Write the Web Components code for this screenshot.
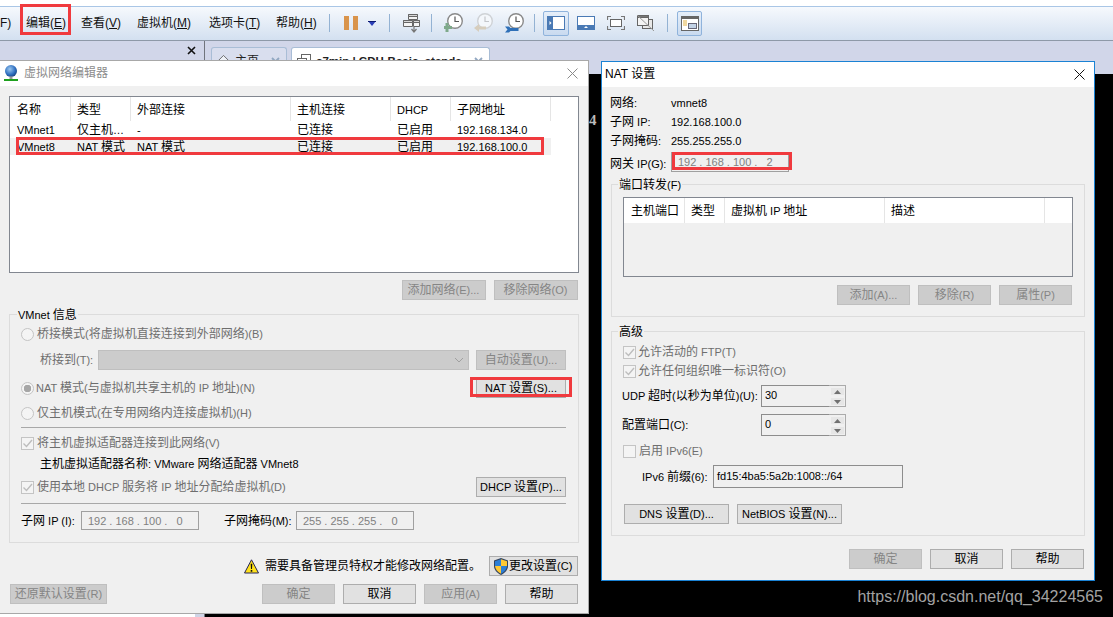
<!DOCTYPE html>
<html lang="zh-CN">
<head>
<meta charset="utf-8">
<title>虚拟网络编辑器</title>
<style>
  html, body { margin: 0; padding: 0; background: #000; overflow: hidden; }
  body { font: 11px/14px "Liberation Sans", "Noto Sans CJK SC", sans-serif; color: #000; }
  .zh { font-size: 12px; }
  .off { color: #6e6e6e; }
  svg { display: block; flex: none; }
</style>
</head>
<body>
<vm-desktop>
  <vm-toolbar>
    <vm-menu-item style="width:26px">F)</vm-menu-item>
    <vm-menu-item style="width:55px">编辑(<u>E</u>)</vm-menu-item>
    <vm-menu-item style="width:56px">查看(<u>V</u>)</vm-menu-item>
    <vm-menu-item style="width:72px">虚拟机(<u>M</u>)</vm-menu-item>
    <vm-menu-item style="width:67px">选项卡(<u>T</u>)</vm-menu-item>
    <vm-menu-item style="width:53px">帮助(<u>H</u>)</vm-menu-item>
    <vm-sep></vm-sep>
    <vm-tool style="margin-left:14px;width:14px">
      <svg width="14" height="14" viewBox="0 0 14 14"><rect width="5" height="14" fill="#d9944c"/><rect x="9" width="5" height="14" fill="#d9944c"/></svg>
    </vm-tool>
    <vm-tool style="margin-left:10px;width:8px">
      <svg width="8" height="5" viewBox="0 0 8 5"><path d="M0 0h8L4 5z" fill="#2a3fb8"/><path d="M0 0h8v1H0z" fill="#0d1a70"/></svg>
    </vm-tool>
    <vm-sep style="margin-left:13px"></vm-sep>
    <vm-tool style="margin-left:12px;width:18px">
      <svg width="17" height="19" viewBox="0 0 17 19" fill="#f4f4f4" stroke="#666"><path d="M5.500 .5h9v5h-9z"/><path d="M.5 6.500h9v6h-9z"/><path d="M10.500 6.500h6v6h-6z"/><path d="M5.500 .5h9v2h-9zM.5 6.500h9v2h-9zM10.500 6.500h6v2h-6z" fill="#d8d8d8"/><path d="M11 13v4.500M8.500 15l2.500 3 2.500-3" fill="none" stroke="#777" stroke-width="1.200"/></svg>
    </vm-tool>
    <vm-sep style="margin-left:11px"></vm-sep>
    <vm-tool style="margin-left:12px;width:19px">
      <svg width="19" height="20" viewBox="0 0 19 20"><circle cx="11" cy="8" r="7.300" fill="#fff" stroke="#8a8a8a" stroke-width="1.400"/><path d="M11 3.500V8.500H15" fill="none" stroke="#555" stroke-width="1.200"/><path d="M3 10v9M0 14.500h8" stroke="#7fa98b" stroke-width="3"/></svg>
    </vm-tool>
    <vm-tool style="margin-left:11px;width:19px">
      <svg width="19" height="20" viewBox="0 0 19 20"><circle cx="11" cy="8" r="7.300" fill="#f4f7fb" stroke="#cfd2d6" stroke-width="1.400"/><path d="M11 3.500V8.500H15" fill="none" stroke="#c4c6ca" stroke-width="1.200"/><path d="M0 15l5-4v2.500h7v3H5V19z" fill="#d6cdbd"/></svg>
    </vm-tool>
    <vm-tool style="margin-left:12px;width:19px">
      <svg width="19" height="20" viewBox="0 0 19 20"><circle cx="11" cy="8" r="7.300" fill="#fff" stroke="#8a8a8a" stroke-width="1.400"/><path d="M11 3.500V8.500H15" fill="none" stroke="#555" stroke-width="1.200"/><path d="M0 13.500h4l1.500 1.500h8v3h-8L4 19.500H0l2.500-3z" fill="#2f70b8"/></svg>
    </vm-tool>
    <vm-sep style="margin-left:10px"></vm-sep>
    <vm-tool active style="margin-left:8px;width:26px">
      <svg width="18" height="14" viewBox="0 0 18 14"><rect x=".5" y=".5" width="17" height="13" fill="#fff" stroke="#4a7ab5"/><rect width="6" height="14" fill="#4a7ab5"/><path d="M2.500 5l2 2-2 2z" fill="#fff"/></svg>
    </vm-tool>
    <vm-tool style="margin-left:8px;width:18px">
      <svg width="18" height="14" viewBox="0 0 18 14"><rect x=".5" y=".5" width="17" height="13" fill="#fff" stroke="#4a7ab5"/><rect y="9" width="18" height="5" fill="#4a7ab5"/><path d="M7 12l2-2 2 2z" fill="#fff"/></svg>
    </vm-tool>
    <vm-tool style="margin-left:12px;width:18px">
      <svg width="18" height="14" viewBox="0 0 18 14" fill="none" stroke="#777"><rect x="3.500" y="3.500" width="11" height="7" fill="#fff" stroke="#666"/><path d="M.5 4V.5H4M14 .5h3.500V4M17.500 10v3.500H14M4 13.500H.5V10" stroke-width="1.200"/></svg>
    </vm-tool>
    <vm-tool style="margin-left:12px;width:18px">
      <svg width="18" height="16" viewBox="0 0 18 16" fill="none" stroke="#666"><rect x="5.500" y="4.500" width="10" height="9" fill="#e8e8e8"/><rect x=".5" y=".5" width="11" height="10" fill="#f4f4f4"/><path d="M.5 .5h11v2h-11z" fill="#777"/><path d="M0 0l17 16" stroke="#999"/></svg>
    </vm-tool>
    <vm-sep style="margin-left:12px"></vm-sep>
    <vm-tool active style="margin-left:9px;width:25px">
      <svg width="18" height="15" viewBox="0 0 18 15"><rect x=".5" y=".5" width="17" height="14" fill="#fff" stroke="#666"/><rect width="18" height="3" fill="#666"/><path d="M2 5h4M2 7h4M2 9h4" stroke="#e0b040"/><rect x="7.500" y="7.500" width="8" height="5" fill="#c3d3e6" stroke="#667"/></svg>
    </vm-tool>
  </vm-toolbar>

  <vm-workspace>
    <vm-tab slot="tabs" style="width:76px;margin-left:6px">
      <svg slot="icon" width="13" height="14" viewBox="0 0 14 14" fill="#eef1f7" stroke="#666"><path d="M7 1l6 6h-2v6H3V7H1z"/></svg>
      主页
    </vm-tab>
    <vm-tab slot="tabs" active style="width:199px;margin-left:4px">
      <svg slot="icon" width="14" height="14" viewBox="0 0 14 14" fill="#fff" stroke="#666"><rect x="4.500" y=".5" width="9" height="8"/><rect x=".5" y="4.500" width="9" height="8"/></svg>
      <b style="font-size:11.500px">c7min | CDH-Basic_standa</b>
    </vm-tab>
    <span slot="terminal">4</span>
  </vm-workspace>

  <vm-window style="left:-1px;top:60px;width:590px;height:554px;--title-color:#8c8c8c;--close-color:#8a8a8a;--edge:#a8a8a8">
    <svg slot="icon" width="14" height="16" viewBox="0 0 14 16"><defs><radialGradient id="globe" cx=".4" cy=".35" r=".75"><stop offset="0" stop-color="#9cc8f0"/><stop offset=".6" stop-color="#2f6fc0"/><stop offset="1" stop-color="#13366f"/></radialGradient></defs><circle cx="7" cy="6" r="6" fill="url(#globe)"/><path d="M5.500 11.500h3V14h-3z" fill="#999"/><path d="M0 14h14v2H0z" fill="#1ea01e"/></svg>
    <span slot="title">虚拟网络编辑器</span>

    <vm-listview id="nets" style="width:570px;height:177px;margin:10px 0 0 9px"></vm-listview>
    <vm-row style="margin:7px 0 0 9px;width:568.500px;gap:8px;justify-content:flex-end">
      <vm-button disabled style="width:84px">添加网络(E)...</vm-button>
      <vm-button disabled style="width:84px">移除网络(O)</vm-button>
    </vm-row>

    <vm-group style="margin:14px 0 0 9px;width:570px;height:229px;padding:9px 12px 0 11px">
      <span slot="label">VMnet 信息</span>
      <vm-row><vm-option type="radio">桥接模式(将虚拟机直接连接到外部网络)(B)</vm-option></vm-row>
      <vm-row style="margin-top:6px;gap:7px">
        <span class="off" style="margin-left:19px;width:51px">桥接到(T):</span>
        <vm-select style="width:371px"></vm-select>
        <vm-button disabled style="width:90px">自动设置(U)...</vm-button>
      </vm-row>
      <vm-row style="margin-top:8px;justify-content:space-between">
        <vm-option type="radio" checked style="--gap:2px">NAT 模式(与虚拟机共享主机的 IP 地址)(N)</vm-option>
        <vm-button style="width:90px">NAT 设置(S)...</vm-button>
      </vm-row>
      <vm-row style="margin-top:5px"><vm-option type="radio">仅主机模式(在专用网络内连接虚拟机)(H)</vm-option></vm-row>
      <vm-rule style="margin-top:4px"></vm-rule>
      <vm-row style="margin-top:5px"><vm-option type="check" checked>将主机虚拟适配器连接到此网络(V)</vm-option></vm-row>
      <vm-row style="margin-top:1px"><span style="margin-left:19px">主机虚拟适配器名称: VMware 网络适配器 VMnet8</span></vm-row>
      <vm-row style="margin-top:3px;justify-content:space-between">
        <vm-option type="check" checked>使用本地 DHCP 服务将 IP 地址分配给虚拟机(D)</vm-option>
        <vm-button style="width:90px">DHCP 设置(P)...</vm-button>
      </vm-row>
      <vm-rule style="margin-top:6px"></vm-rule>
      <vm-row style="margin-top:7px;height:19px">
        <span style="width:60px">子网 IP (I):</span>
        <vm-ip value="192.168.100.0"></vm-ip>
        <span style="margin-left:25px;width:72px">子网掩码(M):</span>
        <vm-ip value="255.255.255.0"></vm-ip>
      </vm-row>
    </vm-group>

    <vm-row style="margin:13px 0 0 0;padding-right:10.500px;justify-content:flex-end">
      <svg width="15" height="15" viewBox="0 0 15 15"><path d="M7.500 .8L14.500 14H.5z" fill="#ffe11a" stroke="#23235a"/><path d="M6.700 4.800h1.600l-.3 5.200H7zM6.700 11h1.600v1.700H6.700z" fill="#111"/></svg>
      <span style="margin:0 8px 0 6px">需要具备管理员特权才能修改网络配置。</span>
      <vm-button style="width:88.500px;gap:1px">
        <svg slot="icon" width="14" height="17" viewBox="0 0 14 17"><path d="M7 0L14 2.500V8c0 4-3 7-7 9-4-2-7-5-7-9V2.500z" fill="#34445e"/><path d="M7 1.200V8H1V3.200z" fill="#2c7fd6"/><path d="M7 1.200L13 3.200V8H7z" fill="#ffc933"/><path d="M1 8h6v7.700C3.600 14 1.300 11.300 1 8z" fill="#ffc933"/><path d="M7 8h6c-.3 3.300-2.600 6-6 7.700z" fill="#2c7fd6"/></svg>
        更改设置(C)
      </vm-button>
    </vm-row>
    <vm-row style="margin:8px 0 0 10px;width:568px;gap:8px">
      <vm-button disabled style="width:97px;margin-right:auto">还原默认设置(R)</vm-button>
      <vm-button disabled style="width:73px">确定</vm-button>
      <vm-button style="width:73px">取消</vm-button>
      <vm-button disabled style="width:73px">应用(A)</vm-button>
      <vm-button style="width:73px">帮助</vm-button>
    </vm-row>
  </vm-window>

  <vm-window style="left:601px;top:61px;width:494px;height:520px;--title-color:#000;--close-color:#111;--edge:#1a82d4;--title-size:12px;--title-pad:3px;--close-pad:9px">
    <span slot="title">NAT 设置</span>

    <vm-row style="margin:6px 0 0 8px;height:19px"><span style="width:61px">网络:</span><span>vmnet8</span></vm-row>
    <vm-row style="margin-left:8px;height:19px"><span style="width:61px">子网 IP:</span><span>192.168.100.0</span></vm-row>
    <vm-row style="margin-left:8px;height:19px"><span style="width:61px">子网掩码:</span><span>255.255.255.0</span></vm-row>
    <vm-row style="margin:2px 0 0 8px;height:20px"><span style="width:61px;margin-top:3px">网关 IP(G):</span><vm-ip value="192.168.100.2" style="height:20px"></vm-ip></vm-row>

    <vm-group style="margin:12px 0 0 9px;width:474px;height:133px;padding:12px 0 0 11px;--label-left:6px">
      <span slot="label">端口转发(F)</span>
      <vm-listview id="ports" style="width:450px;height:80px;--list-bg:#f0f0f0;--head-height:25px"></vm-listview>
      <vm-row style="margin-top:8px;width:449px;gap:8px;justify-content:flex-end">
        <vm-button disabled style="width:73px">添加(A)...</vm-button>
        <vm-button disabled style="width:73px">移除(R)</vm-button>
        <vm-button disabled style="width:73px">属性(P)</vm-button>
      </vm-row>
    </vm-group>

    <vm-group style="margin:14px 0 0 9px;width:474px;height:205px;padding:10px 0 0 11px;--label-left:6px">
      <span slot="label">高级</span>
      <vm-row><vm-option type="check" checked style="--gap:2px">允许活动的 FTP(T)</vm-option></vm-row>
      <vm-row style="margin-top:-1px"><vm-option type="check" checked style="--gap:2px">允许任何组织唯一标识符(O)</vm-option></vm-row>
      <vm-row style="margin:4px 0 0 -1px;height:22px"><span style="width:139px">UDP 超时(以秒为单位)(U):</span><vm-spin value="30"></vm-spin></vm-row>
      <vm-row style="margin:7px 0 0 -1px;height:22px"><span style="width:139px">配置端口(C):</span><vm-spin value="0"></vm-spin></vm-row>
      <vm-row style="margin-top:5px"><vm-option type="check" style="--gap:3px">启用 IPv6(E)</vm-option></vm-row>
      <vm-row style="margin:4px 0 0 19px;height:23px"><span style="width:71px">IPv6 前缀(6):</span><vm-input style="width:190px">fd15:4ba5:5a2b:1008::/64</vm-input></vm-row>
      <vm-row style="margin:16px 0 0 1px;gap:8px">
        <vm-button style="width:105px">DNS 设置(D)...</vm-button>
        <vm-button style="width:105px">NetBIOS 设置(N)...</vm-button>
      </vm-row>
    </vm-group>

    <vm-row style="margin-top:13px;padding-right:10px;gap:8px;justify-content:flex-end">
      <vm-button disabled style="width:73px">确定</vm-button>
      <vm-button style="width:73px">取消</vm-button>
      <vm-button style="width:73px">帮助</vm-button>
    </vm-row>
  </vm-window>

  <!-- annotations drawn on top of the screenshot -->
  <vm-mark style="left:20px;top:4px;width:51px;height:31px"></vm-mark>
  <vm-mark style="left:16px;top:137px;width:528px;height:18px"></vm-mark>
  <vm-mark style="left:470px;top:377px;width:102px;height:20px"></vm-mark>
  <vm-mark style="left:672px;top:152px;width:120px;height:18px"></vm-mark>
  <vm-watermark>https://blog.csdn.net/qq_34224565</vm-watermark>
</vm-desktop>

<script>
  const CJK = /[\u3000-\u303f\u4e00-\u9fff\uff00-\uffef]+/g;
  const wrapCjk = (s) => s.replace(CJK, (m) => `<span class="zh">${m}</span>`);

  // latin text is 11px and chinese text 12px in the original, so split the runs
  function markCjk(root) {
    const walker = document.createTreeWalker(root, NodeFilter.SHOW_TEXT);
    const nodes = [];
    while (walker.nextNode()) {
      if (walker.currentNode.parentElement.closest("script,style,svg")) continue;
      if (walker.currentNode.data.search(CJK) >= 0) nodes.push(walker.currentNode);
    }
    nodes.forEach((node) => {
      const span = document.createElement("span");
      span.innerHTML = wrapCjk(node.data);
      node.replaceWith(...span.childNodes);
    });
  }

  class Shadowed extends HTMLElement {
    constructor() {
      super();
      this.attachShadow({ mode: "open" });
      this.shadowRoot.innerHTML = `<style>${this.constructor.css}</style>${this.constructor.html}`;
    }
  }

  function simple(name, css, html = "<slot></slot>") {
    customElements.define(name, class extends Shadowed {
      static css = css;
      static html = html;
    });
  }

  simple("vm-desktop", `
    :host { display: block; position: relative; width: 1113px; height: 617px; overflow: hidden; background: #000; }
  `);

  simple("vm-toolbar", `
    :host { display: block; padding-top: 6px; background: #fff; }
    .bar {
      display: flex; align-items: center; height: 35px; padding-bottom: 1px; box-sizing: border-box;
      border-top: 1px solid #a9c6e6; border-bottom: 1px solid #8e99a8;
      background: linear-gradient(#f6f9fd, #d3e0f0);
    }
  `, `<div class="bar"><slot></slot></div>`);

  simple("vm-menu-item", `
    :host { display: block; flex: none; font-size: 12px; color: #111; white-space: nowrap; }
  `);

  simple("vm-sep", `
    :host { display: block; flex: none; width: 1px; height: 18px; background: #93b2d3; }
  `);

  simple("vm-tool", `
    :host { display: flex; flex: none; align-items: center; justify-content: center; height: 25px; box-sizing: border-box; }
    :host([active]) { border: 1px solid #8fb3dc; border-radius: 2px; background: linear-gradient(#e6effa, #c9daef); }
  `);

  simple("vm-workspace", `
    :host { display: grid; grid-template-columns: 204px 1fr; height: 576px; }
    .side { background: linear-gradient(90deg, #fff 195px, #cfd4e6 195px); }
    .side-head { display: flex; justify-content: flex-end; height: 20px; padding: 5px 8px 0 0; box-sizing: border-box; background: #d1d6e9; }
    .main { display: flex; flex-direction: column; border-left: 1px solid #70747c; }
    .tabs { display: flex; height: 33px; flex: none; padding-top: 6px; box-sizing: border-box; background: #d1d6e9; overflow: hidden; }
    .terminal { flex: 1; padding: 39px 0 0 384px; background: #000; color: #bbb; font: bold 15px/14px "Liberation Serif", serif; }
  `, `
    <div class="side"><div class="side-head">
      <svg width="9" height="9" viewBox="0 0 9 9"><path d="M1 1l7 7M8 1L1 8" stroke="#111" stroke-width="1.600"/></svg>
    </div></div>
    <div class="main">
      <div class="tabs"><slot name="tabs"></slot></div>
      <div class="terminal"><slot name="terminal"></slot></div>
    </div>
  `);

  simple("vm-tab", `
    :host {
      display: flex; flex: none; gap: 5px; align-items: center; height: 27px; padding: 0 5px; box-sizing: border-box;
      border: 1px solid #a9bdd6; border-bottom: 0; border-radius: 3px 3px 0 0; background: #d9deee; font-size: 12px; color: #222; overflow: hidden; white-space: nowrap;
    }
    :host([active]) { background: #fff; }
    .x { margin-left: auto; margin-right: 1px; }
  `, `
    <slot name="icon"></slot><span><slot></slot></span>
    <svg class="x" width="9" height="9" viewBox="0 0 9 9"><path d="M1 1l7 7M8 1L1 8" stroke="#92a8c2" stroke-width="1.800"/></svg>
  `);

  simple("vm-window", `
    :host {
      display: flex; flex-direction: column; position: absolute; box-sizing: border-box;
      border: 1px solid var(--edge); background: #f0f0f0;
    }
    .title {
      display: flex; align-items: center; gap: 6px; flex: none; height: 25px; box-sizing: border-box;
      padding: 0 var(--close-pad, 10px) 2px var(--title-pad, 4px);
      background: #fff; color: var(--title-color); font-size: var(--title-size, inherit);
    }
    .title svg { margin: 2px 0 0 auto; }
    .body { display: flex; flex-direction: column; flex: 1; min-height: 0; }
  `, `
    <div class="title">
      <slot name="icon"></slot><slot name="title"></slot>
      <svg width="11" height="11" viewBox="0 0 11 11"><path d="M.5 .5l10 10M10.500 .5l-10 10" stroke="var(--close-color)"/></svg>
    </div>
    <div class="body"><slot></slot></div>
  `);

  simple("vm-group", `
    :host { display: flex; flex-direction: column; flex: none; position: relative; box-sizing: border-box; border: 1px solid #dcdcdc; }
    .label { position: absolute; left: var(--label-left, 7px); top: -7px; padding: 0 1px; background: #f0f0f0; }
  `, `<div class="label"><slot name="label"></slot></div><slot></slot>`);

  simple("vm-row", `
    :host { display: flex; align-items: center; flex: none; height: 20px; box-sizing: border-box; white-space: nowrap; }
  `);

  simple("vm-rule", `
    :host { display: block; flex: none; height: 1px; background: #a8a8a8; }
  `);

  simple("vm-button", `
    :host {
      display: inline-flex; flex: none; align-items: center; justify-content: center; height: 20px; box-sizing: border-box;
      border: 1px solid #adadad; background: #e1e1e1; color: #000; white-space: nowrap;
    }
    :host([disabled]) { border-color: #bfbfbf; background: #cccccc; color: #858585; }
  `, `<slot name="icon"></slot><span><slot></slot></span>`);

  customElements.define("vm-option", class extends Shadowed {
    static css = `
      :host { display: inline-flex; align-items: center; gap: var(--gap, 3px); color: #6e6e6e; white-space: nowrap; }
      .box { display: block; width: 13px; height: 13px; box-sizing: border-box; flex: none; border: 1px solid #c4c4c4; background: #f4f4f4; }
    `;
    static html = `<span class="box"></span><span><slot></slot></span>`;
    connectedCallback() {
      const box = this.shadowRoot.querySelector(".box");
      const checked = this.hasAttribute("checked");
      if (this.getAttribute("type") === "radio") {
        box.style.borderRadius = "50%";
        if (checked) box.style.background = "radial-gradient(circle, #a6a6a6 3.500px, #f4f4f4 4px)";
      } else if (checked) {
        box.innerHTML = `<svg width="11" height="11" viewBox="0 0 11 11" style="display:block"><path d="M1.500 5.500l3 3 5.500-6.500" fill="none" stroke="#bdbdbd" stroke-width="1.400"/></svg>`;
      }
    }
  });

  simple("vm-select", `
    :host { display: flex; flex: none; align-items: center; justify-content: flex-end; height: 20px; padding-right: 4px; box-sizing: border-box; border: 1px solid #bfbfbf; background: #cccccc; }
  `, `<svg width="10" height="6" viewBox="0 0 10 6"><path d="M1 1l4 4 4-4" fill="none" stroke="#a0a0a0"/></svg>`);

  simple("vm-input", `
    :host { display: block; flex: none; height: 23px; padding: 3px 3px 0; box-sizing: border-box; border: 1px solid #8d8d8d; }
  `);

  customElements.define("vm-ip", class extends Shadowed {
    static css = `
      :host { display: flex; flex: none; align-items: center; width: 118px; height: 19px; padding-left: 6px; box-sizing: border-box; border: 1px solid #a0a0a0; color: #808080; }
      .octet { display: inline-block; width: 18px; text-align: center; }
      .dot { display: inline-block; width: 9.500px; text-align: center; }
    `;
    static html = `<span id="value"></span>`;
    connectedCallback() {
      this.shadowRoot.getElementById("value").innerHTML = this.getAttribute("value")
        .split(".")
        .map((octet) => `<span class="octet">${octet}</span>`)
        .join(`<span class="dot">.</span>`);
    }
  });

  customElements.define("vm-spin", class extends Shadowed {
    static css = `
      :host { display: flex; flex: none; width: 85px; height: 22px; box-sizing: border-box; border: 1px solid #8d8d8d; border-right: 0; }
      .text { flex: 1; padding: 2px 0 0 3px; }
      .btns { display: flex; flex-direction: column; gap: 2px; width: 17px; margin: -1px 0; padding: 1px; box-sizing: border-box; border: 1px solid #ababab; border-left: 0; }
      .btn { display: flex; flex: 1; align-items: center; justify-content: center; margin: 1px 0 0 1px; background: #e6e6e6; }
    `;
    static html = `
      <div class="text"></div>
      <div class="btns">
        <div class="btn"><svg width="7" height="4" viewBox="0 0 7 4"><path d="M3.500 0L7 4H0z" fill="#707070"/></svg></div>
        <div class="btn"><svg width="7" height="4" viewBox="0 0 7 4"><path d="M0 0h7L3.500 4z" fill="#707070"/></svg></div>
      </div>
    `;
    connectedCallback() {
      this.shadowRoot.querySelector(".text").textContent = this.getAttribute("value");
    }
  });

  customElements.define("vm-listview", class extends Shadowed {
    static css = `
      :host { display: block; flex: none; box-sizing: border-box; border: 1px solid #828790; background: var(--list-bg, #fff); overflow: hidden; }
      .zh { font-size: 12px; }
      .row { display: flex; height: 17px; line-height: 19px; white-space: nowrap; }
      .row.selected .cell { background: #f0f0f0; }
      .head { height: var(--head-height, 24px); line-height: calc(var(--head-height, 24px) + 2px); background: #fff; }
      .head .cell { border-right: 1px solid #e5e5e5; }
      .head .cell:last-child { border-right: 0; flex: 1; }
      .cell { flex: none; box-sizing: border-box; padding-left: 6px; overflow: hidden; }
      .cell:first-child { padding-left: 7px; }
    `;
    static html = `<div id="list"></div>`;
    set data({ columns, rows = [], selected = -1 }) {
      const cells = (values, widths) =>
        values.map((v, i) => `<div class="cell" style="width:${widths[i]}px">${wrapCjk(v)}</div>`).join("");
      const widths = columns.map((c) => c.width);
      let out = `<div class="row head">${cells(columns.map((c) => c.name), widths)}<div class="cell"></div></div>`;
      rows.forEach((row, i) => {
        out += `<div class="row${i === selected ? " selected" : ""}">${cells(row, widths)}</div>`;
      });
      this.shadowRoot.getElementById("list").innerHTML = out;
    }
  });

  simple("vm-mark", `
    :host { display: block; position: absolute; box-sizing: border-box; border: 3px solid #f03a3e; pointer-events: none; }
  `, "");

  simple("vm-watermark", `
    :host { display: block; position: absolute; right: 10px; top: 588px; font: 16px/18px "Liberation Sans", sans-serif; color: #a3a3a3; white-space: nowrap; }
  `);

  markCjk(document.body);

  document.getElementById("nets").data = {
    columns: [
      { name: "名称", width: 61 },
      { name: "类型", width: 60 },
      { name: "外部连接", width: 160 },
      { name: "主机连接", width: 100 },
      { name: "DHCP", width: 60 },
      { name: "子网地址", width: 100 },
    ],
    rows: [
      ["VMnet1", "仅主机…", "-", "已连接", "已启用", "192.168.134.0"],
      ["VMnet8", "NAT 模式", "NAT 模式", "已连接", "已启用", "192.168.100.0"],
    ],
    selected: 1,
  };

  document.getElementById("ports").data = {
    columns: [
      { name: "主机端口", width: 61 },
      { name: "类型", width: 40 },
      { name: "虚拟机 IP 地址", width: 160 },
      { name: "描述", width: 160 },
    ],
  };
</script>
</body>
</html>
